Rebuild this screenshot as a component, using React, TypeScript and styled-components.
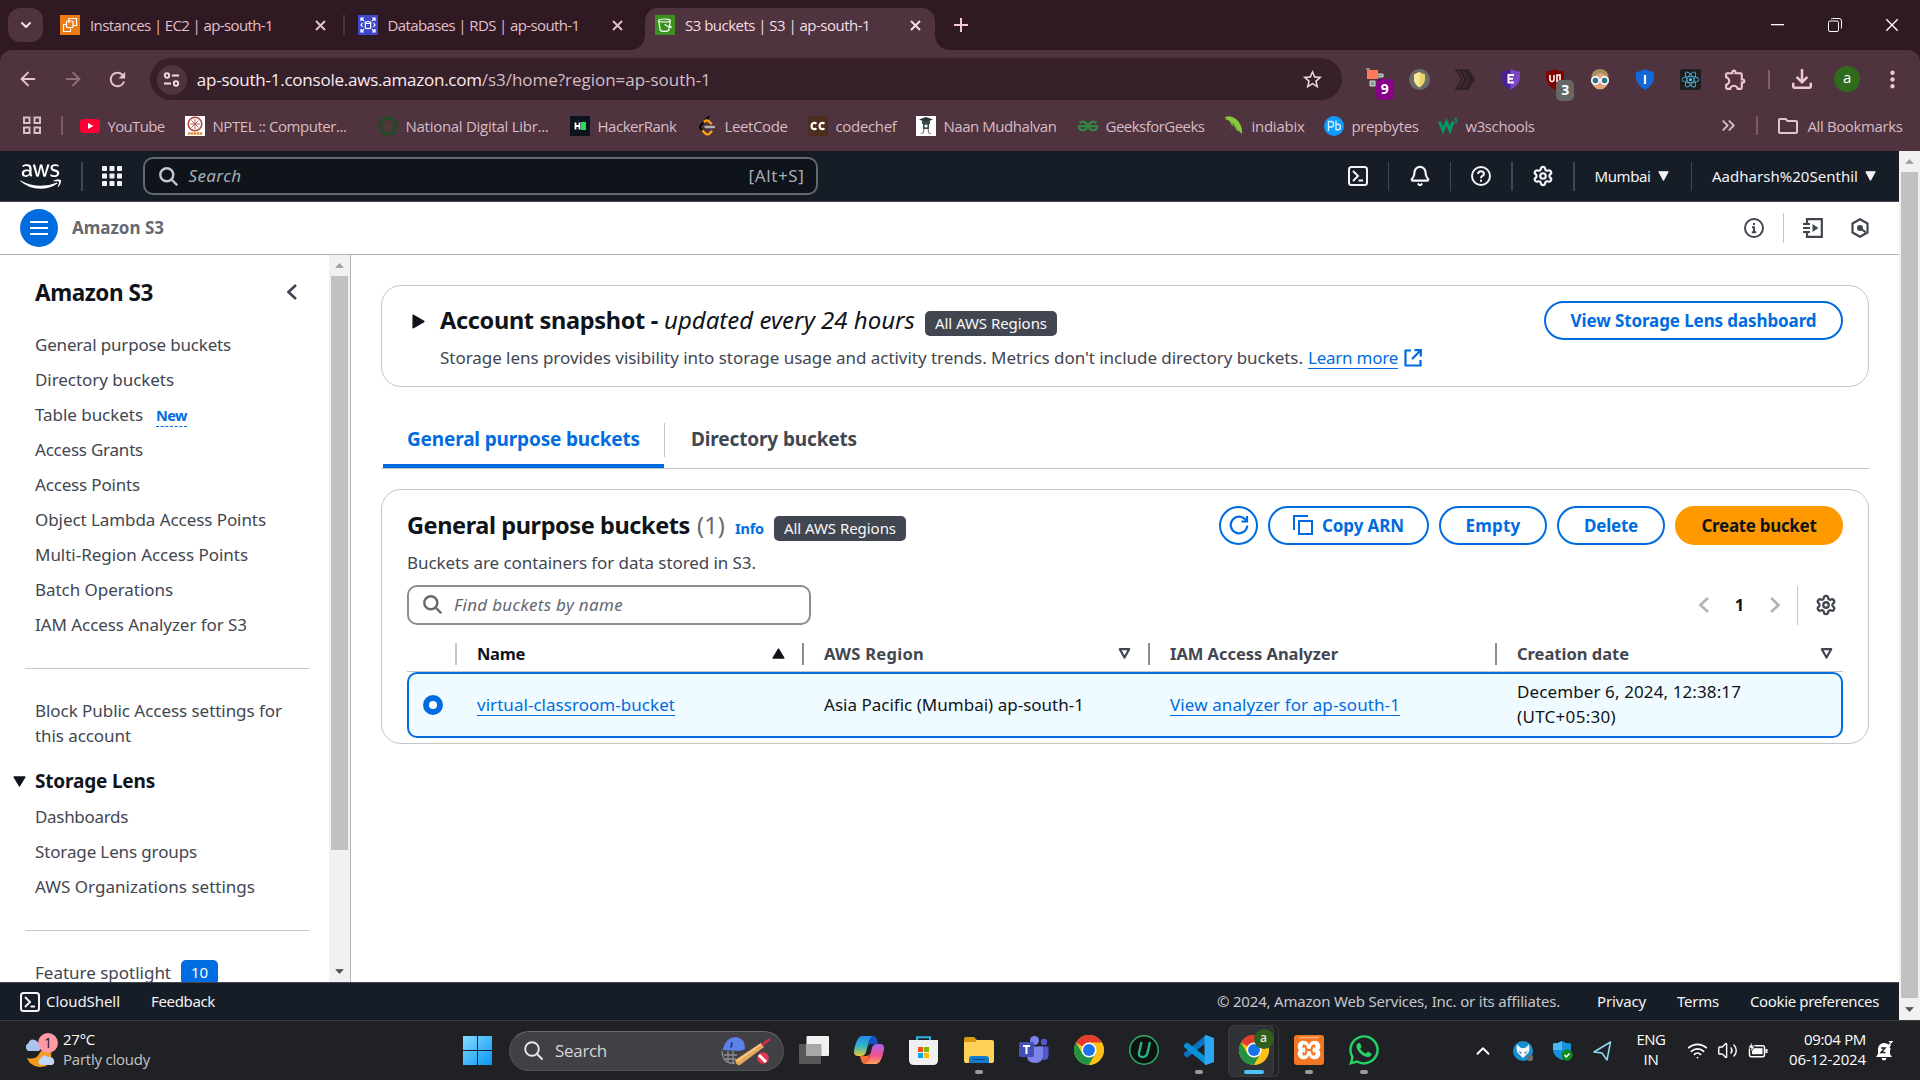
import React, { useLayoutEffect, useRef, useState } from "react";
import styled, { createGlobalStyle, css } from "styled-components";
import { Settings, Bell, Wifi, Volume2, ArrowLeft, ArrowRight, ChevronDown, ChevronUp, ChevronsRight } from "lucide-react";
import { FaAws, FaReact, FaWhatsapp } from "react-icons/fa";
import { MdOutlineExtension, MdStarBorder, MdOutlineFileDownload, MdMoreVert, MdOutlineFolder, MdRefresh } from "react-icons/md";
import { SiGeeksforgeeks } from "react-icons/si";

const ui = `"Open Sans", "Noto Sans", sans-serif`;
const ember = `"Noto Sans", "Open Sans", sans-serif`;
const blue = "#006ce0";
const ink = "#0f141a";
const grey = "#424650";

const Global = createGlobalStyle`
  * { box-sizing: border-box; }
  body { margin: 0; background: #fff; overflow: hidden; }
  svg { display: block; flex: none; }
`;

/* ---------- text that keeps to a known width ---------- */
const FitSpan = styled.span`
  display: inline-block;
  white-space: pre;
  flex: none;
`;
function Fit({ w, children, className }: { w: number; children: string; className?: string }) {
  const ref = useRef<HTMLSpanElement>(null);
  const [spacing, setSpacing] = useState(0);
  useLayoutEffect(() => {
    const el = ref.current;
    if (el) setSpacing((w - el.getBoundingClientRect().width) / children.length);
  }, []);
  return (
    <FitSpan ref={ref} className={className} style={{ letterSpacing: `${spacing}px` }}>
      {children}
    </FitSpan>
  );
}

const Screen = styled.div`
  width: 1920px;
  height: 1080px;
  display: flex;
  flex-direction: column;
  overflow: hidden;
  background: #fff;
`;

/* ---------- browser chrome ---------- */
const TabStrip = styled.div`
  height: 50px;
  background: #2f1922;
  display: flex;
  align-items: center;
  padding-left: 8px;
  font: 400 15px/20px ${ui};
  color: #e3bfcb;
`;
const TabSearch = styled.div`
  width: 35px;
  height: 34px;
  border-radius: 12px;
  background: #4f333e;
  color: #f5dfe6;
  display: grid;
  place-items: center;
`;
const Tab = styled.div<{ $w: number; $pad: number; $close: number }>`
  width: ${(p) => p.$w}px;
  padding-left: ${(p) => p.$pad}px;
  padding-right: ${(p) => p.$close}px;
  height: 42px;
  display: flex;
  align-items: center;
`;
const ActiveTab = styled(Tab)`
  align-self: flex-end;
  padding-bottom: 8px;
  position: relative;
  background: #4f333e;
  border-radius: 13px 13px 0 0;
  color: #f5dfe6;
  &::before,
  &::after {
    content: "";
    position: absolute;
    bottom: 0;
    width: 14px;
    height: 14px;
  }
  &::before {
    left: -14px;
    background: radial-gradient(circle at 0 0, transparent 13.5px, #4f333e 14px);
  }
  &::after {
    right: -14px;
    background: radial-gradient(circle at 100% 0, transparent 13.5px, #4f333e 14px);
  }
`;
const TabTitle = styled.div`
  margin-left: 10px;
  flex: 1;
`;
const TabClose = styled.div`
  width: 20px;
  display: grid;
  place-items: center;
`;
const TabDivider = styled.div`
  width: 2px;
  height: 20px;
  background: #4f333e;
`;
const NewTab = styled.div`
  width: 51px;
  display: grid;
  place-items: center;
`;
const WindowButtons = styled.div`
  margin-left: auto;
  display: grid;
  grid-template-columns: repeat(3, 57px);
  place-items: center;
  color: #fff;
`;
const ToolbarWrap = styled.div`
  background: #2f1922;
`;
const Toolbar = styled.div`
  height: 101px;
  background: #4f333e;
  border-radius: 12px 12px 0 0;
`;
const AddressRow = styled.div`
  height: 58px;
  display: flex;
  align-items: center;
  padding-left: 6px;
  color: #e8c3d0;
`;
const NavButton = styled.div<{ $dim?: boolean }>`
  width: 44.6px;
  display: grid;
  place-items: center;
  opacity: ${(p) => (p.$dim ? 0.42 : 1)};
`;
const Omnibox = styled.div`
  width: 1192px;
  height: 42px;
  margin-left: 10px;
  border-radius: 21px;
  background: #36202a;
  display: flex;
  align-items: center;
  padding: 1px 18px 0 7px;
  font: 400 17px/24px ${ui};
  color: #d4bdc5;
`;
const SiteInfo = styled.div`
  width: 30px;
  height: 30px;
  border-radius: 50%;
  background: #4f333e;
  color: #f3dbe3;
  display: grid;
  place-items: center;
  margin-right: 10px;
`;
const Host = styled(Fit)`
  color: #fbecf1;
`;
const StarSlot = styled.div`
  margin-left: auto;
  color: #ecd7de;
`;
const Extensions = styled.div`
  display: grid;
  grid-template-columns: repeat(9, 45.1px);
  place-items: center;
  margin-left: 10.5px;
`;
const Ext = styled.div`
  position: relative;
  display: grid;
  place-items: center;
`;
const ExtBadge = styled.span<{ $bg: string }>`
  position: absolute;
  left: 11px;
  top: 11px;
  width: 18px;
  height: 21px;
  border-radius: 5px;
  background: ${(p) => p.$bg};
  color: #fff;
  font: 700 14px/20px ${ui};
  text-align: center;
`;
const ToolDivider = styled.div`
  width: 1.5px;
  height: 19px;
  margin: 0 10px 0 10px;
  background: #80606c;
`;
const ToolSlot = styled.div`
  width: 45px;
  display: grid;
  place-items: center;
`;
const Avatar = styled.div`
  width: 26px;
  height: 26px;
  border-radius: 50%;
  background: #2f6b1c;
  color: #fff;
  font: 400 15px/23px ${ui};
  text-align: center;
`;
const BookmarkRow = styled.div`
  height: 35px;
  display: flex;
  align-items: center;
  font: 400 15px/20px ${ui};
  color: #d6bcc5;
  padding-left: 22px;
`;
const BookmarkDivider = styled.div`
  width: 2px;
  height: 19px;
  margin: 0 17px 0 18.5px;
  background: #7a5a66;
`;
const Bookmark = styled.div<{ $w: number }>`
  width: ${(p) => p.$w}px;
  display: flex;
  align-items: center;
  gap: 8px;
`;
const BookmarkEnd = styled.div`
  margin-left: auto;
  padding-right: 17.5px;
  display: flex;
  align-items: center;
`;
const EndDivider = styled(BookmarkDivider)`
  margin: 0 18px 0 17px;
`;
const FolderLabel = styled.div`
  display: flex;
  align-items: center;
  gap: 8px;
`;

/* ---------- page area ---------- */
const Viewport = styled.div`
  height: 869px;
  display: flex;
`;
const Page = styled.div`
  width: 1899px;
  display: flex;
  flex-direction: column;
  font-family: ${ember};
`;
const PageScroll = styled.div`
  width: 21px;
  background: #f1f1f1;
  display: flex;
  flex-direction: column;
  align-items: center;
`;
const ScrollCap = styled.div`
  height: 21px;
  display: grid;
  place-items: center;
`;
const ScrollThumb = styled.div<{ $h: number }>`
  width: 17px;
  height: ${(p) => p.$h}px;
  background: #c1c1c1;
  margin-bottom: auto;
`;
const AwsNav = styled.div`
  height: 51px;
  background: #161d26;
  border-bottom: 1px solid #424650;
  display: flex;
  align-items: center;
  padding-left: 20px;
  color: #f3f3f7;
  font-size: 15px;
`;
const NavDivider = styled.div<{ $l?: number; $r?: number }>`
  width: 1.5px;
  height: 29px;
  background: #424650;
  margin: 0 ${(p) => p.$r || 0}px 0 ${(p) => p.$l || 0}px;
`;
const NavSearch = styled.div`
  margin-left: 21px;
  width: 675px;
  height: 38px;
  border: 2px solid #656871;
  border-radius: 10px;
  background: #0f141a;
  color: #a9abb4;
  display: flex;
  align-items: center;
  padding: 0 11px 0 14px;
  font-size: 17px;
`;
const Italic = styled(Fit)`
  font-style: italic;
`;
const NavSearchText = styled.div`
  margin: -1px 0 0 11px;
  flex: 1;
`;
const NavShortcut = styled.div`
  margin-top: -2px;
`;
const NavRight = styled.div`
  margin-left: auto;
  display: flex;
  align-items: center;
`;
const NavIcon = styled.div`
  width: 60.2px;
  display: grid;
  place-items: center;
`;
const NavMenu = styled.div<{ $l: number; $r: number }>`
  display: flex;
  align-items: center;
  gap: 7px;
  padding: 0 ${(p) => p.$r}px 0 ${(p) => p.$l}px;
`;
const Crumbs = styled.div`
  height: 53px;
  border-bottom: 1px solid #b4b4bb;
  display: flex;
  align-items: center;
  padding: 0 29px 0 20px;
`;
const MenuButton = styled.div`
  width: 38px;
  height: 38px;
  border-radius: 50%;
  background: ${blue};
  display: grid;
  place-items: center;
  margin-right: 14px;
`;
const CrumbText = styled.div`
  margin-top: -2px;
  font-weight: 700;
  font-size: 17px;
  color: #656871;
`;
const CrumbTools = styled.div`
  margin-left: auto;
  display: flex;
  align-items: center;
  color: ${grey};
`;
const CrumbDivider = styled.div`
  width: 1px;
  height: 30px;
  margin: 0 19px;
  background: #c6c6cd;
`;
const CrumbGap = styled.div`
  width: 27px;
`;
const Columns = styled.div`
  flex: 1;
  display: flex;
  min-height: 0;
`;
const Sidebar = styled.div`
  width: 351px;
  flex: none;
  border-right: 1px solid #b4b4bb;
  display: flex;
`;
const SideNav = styled.div`
  width: 329px;
  overflow: hidden;
  padding-left: 35px;
  font-size: 17px;
  line-height: 25px;
  color: ${grey};
`;
const SideHead = styled.div`
  height: 72px;
  display: flex;
  align-items: center;
  justify-content: space-between;
  padding: 2px 32px 0 0;
  font-size: 22.5px;
  font-weight: 700;
  color: ${ink};
`;
const SideLink = styled.div`
  height: 35px;
  display: flex;
  align-items: center;
  white-space: pre;
`;
const SideRule = styled.div<{ $t: number; $b: number }>`
  height: 1px;
  width: 284px;
  margin: ${(p) => p.$t}px 0 ${(p) => p.$b}px -10px;
  background: #c6c6cd;
`;
const SideBlock = styled.div`
  display: flex;
  flex-direction: column;
  align-items: flex-start;
`;
const SideSection = styled.div`
  margin: 15px 0 0 -22px;
  height: 36px;
  display: flex;
  align-items: center;
  gap: 9px;
  color: ${ink};
  font-weight: 700;
  font-size: 19px;
`;
const NewTag = styled.span`
  margin: 2px 0 0 13px;
  font-weight: 700;
  font-size: 14.5px;
  line-height: 21px;
  color: ${blue};
  border-bottom: 1px dashed ${blue};
`;
const CountTag = styled.span`
  margin-left: 10px;
  width: 37px;
  height: 25px;
  line-height: 25px;
  border-radius: 5px;
  background: ${blue};
  color: #fff;
  font-size: 15px;
  text-align: center;
`;
const Main = styled.div`
  flex: 1;
  min-width: 0;
  padding: 30px 30px 0;
  color: ${ink};
`;
const card = css`
  border: 1px solid #c6c6cd;
  border-radius: 20px;
`;
const SnapshotCard = styled.div`
  ${card}
  height: 102px;
  padding: 15px 25px 0 30px;
  display: flex;
  align-items: flex-start;
`;
const SnapArrow = styled.div`
  width: 28px;
  padding-top: 13px;
`;
const SnapBody = styled.div`
  flex: 1;
`;
const TitleLine = styled.div`
  height: 40px;
  padding-bottom: 3px;
  display: flex;
  align-items: center;
  font-size: 23.5px;
  line-height: 30px;
`;
const Strong = styled(Fit)`
  font-weight: 700;
`;
const TitleItalic = styled(Italic)`
  margin-left: 6px;
  font-size: 24px;
`;
const RegionTag = styled.span`
  margin: 8px 0 0 10px;
  width: 132px;
  height: 25px;
  border-radius: 5px;
  background: ${grey};
  color: #f9f9fa;
  font-size: 15px;
  line-height: 25px;
  text-align: center;
`;
const Desc = styled.div`
  height: 34px;
  display: flex;
  align-items: center;
  font-size: 17px;
  line-height: 22px;
  color: ${grey};
`;
const Link = styled(Fit)`
  color: ${blue};
  border-bottom: 1.5px solid ${blue};
  font-size: 17px;
  line-height: 20px;
`;
const LearnMore = styled(Link)`
  margin: 0 6px 0 5px;
`;
const Button = styled.div<{ $w: number }>`
  width: ${(p) => p.$w}px;
  height: 39px;
  border: 2px solid ${blue};
  border-radius: 20px;
  padding-bottom: 1px;
  color: ${blue};
  font-weight: 700;
  font-size: 17px;
  display: flex;
  align-items: center;
  justify-content: center;
  gap: 9px;
`;
const PrimaryButton = styled(Button)`
  background: #ff9900;
  border-color: #ff9900;
  color: ${ink};
`;
const Tabs = styled.div`
  margin-top: 26px;
  height: 56px;
  border-bottom: 1px solid #c6c6cd;
  display: flex;
  font-weight: 700;
  font-size: 19px;
`;
const TabItem = styled.div<{ $active?: boolean }>`
  height: 55px;
  padding: 0 24px 3px 26px;
  display: flex;
  align-items: center;
  color: ${(p) => (p.$active ? blue : grey)};
`;
const ActiveTabItem = styled(TabItem)`
  margin-left: 2px;
  width: 281px;
  padding: 1px 0 0 24px;
  border-bottom: 4px solid ${blue};
  border-radius: 2px 2px 0 0;
`;
const TabRule = styled.div`
  width: 1px;
  height: 34px;
  margin-top: 10px;
  background: #c6c6cd;
`;
const TableCard = styled.div`
  ${card}
  margin-top: 20px;
  height: 255px;
  padding: 16px 25px 0;
`;
const TableHead = styled.div`
  display: flex;
  justify-content: space-between;
`;
const Counter = styled(Fit)`
  margin-left: 7px;
  color: #656871;
`;
const InfoLink = styled(Fit)`
  margin: 7px 0 0 10px;
  font-weight: 700;
  font-size: 14.5px;
  color: ${blue};
`;
const Actions = styled.div`
  display: flex;
  gap: 10px;
`;
const FilterRow = styled.div`
  margin-top: 5px;
  display: flex;
  align-items: center;
  justify-content: space-between;
`;
const FilterBox = styled.div`
  width: 404px;
  height: 40px;
  border: 2px solid #8c8c94;
  border-radius: 10px;
  display: flex;
  align-items: center;
  gap: 12px;
  padding: 0 0 1px 14px;
  color: #656871;
  font-size: 17px;
`;
const Pager = styled.div`
  display: flex;
  align-items: center;
  padding-right: 6px;
  color: ${grey};
`;
const PageNumber = styled.span`
  width: 61px;
  text-align: center;
  font-weight: 700;
  font-size: 16.5px;
  line-height: 24px;
  padding-bottom: 1px;
  color: ${ink};
`;
const PagerDivider = styled.div`
  width: 1px;
  height: 39px;
  margin: 0 17px 0 17px;
  background: #c6c6cd;
`;
const HeaderRow = styled.div`
  display: grid;
  grid-template-columns: 48px 347px 346px 347px minmax(0, 1fr);
  align-items: center;
  margin-top: 11px;
  height: 36px;
  border-bottom: 1px solid #c6c6cd;
  font-weight: 700;
  font-size: 16.5px;
`;
const HeaderCell = styled.div<{ $light?: boolean; $dark?: boolean; $r?: number }>`
  height: 22px;
  border-left: 2px solid ${(p) => (p.$light ? "#c6c6cd" : "#8c8c94")};
  padding: 0 ${(p) => p.$r || 17}px 0 20px;
  display: flex;
  align-items: center;
  justify-content: space-between;
  color: ${(p) => (p.$dark ? ink : grey)};
`;
const DataRow = styled.div`
  display: grid;
  grid-template-columns: 48px 347px 346px 347px minmax(0, 1fr);
  align-items: center;
  height: 66px;
  border: 2px solid ${blue};
  border-radius: 10px;
  background: #f0fbff;
  font-size: 17px;
  line-height: 25px;
`;
const DataCell = styled.div<{ $up?: number }>`
  padding: 0 0 ${(p) => p.$up || 0}px 20px;
  display: flex;
  flex-direction: column;
  align-items: flex-start;
`;
const Radio = styled.div`
  margin-left: 14px;
  width: 20px;
  height: 20px;
  border-radius: 50%;
  border: 6px solid ${blue};
  background: #fff;
`;
const Footer = styled.div`
  height: 38px;
  background: #161d26;
  border-top: 1px solid #424650;
  display: flex;
  align-items: center;
  padding: 0 20px;
  color: #f3f3f7;
  font-size: 15px;
`;
const FooterItem = styled.div<{ $l: number; $soft?: boolean }>`
  margin: -1px 0 0 ${(p) => p.$l}px;
  color: ${(p) => (p.$soft ? "#c6c6cd" : "inherit")};
`;
const FooterEnd = styled.div`
  margin-left: auto;
  display: flex;
`;

/* ---------- taskbar ---------- */
const Taskbar = styled.div`
  height: 60px;
  background: #202124;
  border-top: 1px solid #3b3c3e;
  display: flex;
  align-items: center;
  font: 400 15px/20px ${ui};
  color: #fff;
`;
const Weather = styled.div`
  width: 463px;
  padding-left: 23px;
  display: flex;
  gap: 4px;
  align-items: center;
`;
const Lines = styled.div<{ $align?: string }>`
  display: flex;
  flex-direction: column;
  padding-bottom: 3px;
  align-items: ${(p) => p.$align || "flex-start"};
`;
const Soft = styled(Fit)`
  color: #c4c4c6;
`;
const TaskSearch = styled.div`
  margin: 0 2px 0 17px;
  width: 275px;
  height: 40px;
  border-radius: 20px;
  background: #414145;
  border: 1px solid #515155;
  border-top-color: #68686b;
  display: flex;
  align-items: center;
  padding: 0 12px 0 14px;
  font-size: 17px;
  color: #d6d6d8;
`;
const TaskSearchText = styled.div`
  margin-left: 12px;
  flex: 1;
`;
const TaskSlot = styled.div<{ $active?: boolean }>`
  width: 55px;
  height: 59px;
  padding-top: 14px;
  display: flex;
  flex-direction: column;
  align-items: center;
  position: relative;
  ${(p) =>
    p.$active &&
    css`
      &::before {
        content: "";
        position: absolute;
        left: 2px;
        top: 4px;
        width: 44px;
        height: 50px;
        background: #313236;
        border: 1px solid #3c3d41;
        border-radius: 6px;
      }
      &::after {
        content: "";
        position: absolute;
        left: 44px;
        top: 4px;
        width: 8px;
        height: 50px;
        border: 1px solid #38393d;
        border-left: 0;
        border-radius: 0 6px 6px 0;
      }
    `}
`;
const TaskIcon = styled.div`
  position: relative;
  z-index: 1;
  height: 30px;
  width: 30px;
  display: grid;
  place-content: center;
`;
const RunMark = styled.div<{ $on?: boolean }>`
  position: relative;
  z-index: 1;
  margin-top: 5px;
  width: ${(p) => (p.$on ? 20 : 8)}px;
  height: 4px;
  border-radius: 2px;
  background: ${(p) => (p.$on ? "#4cc2ff" : "#9a9a9c")};
`;
const ProfileDot = styled.span`
  position: absolute;
  left: 15px;
  top: -6px;
  width: 20px;
  height: 20px;
  border-radius: 50%;
  background: #2f5f1c;
  color: #e6efe2;
  font: 600 12px/18px ${ui};
  text-align: center;
`;
const Tray = styled.div`
  margin-left: auto;
  display: flex;
  align-items: center;
  padding-right: 22px;
`;
const TraySlot = styled.div<{ $w: number }>`
  width: ${(p) => p.$w}px;
  display: grid;
  place-items: center;
`;
const ClockSlot = styled(TraySlot)`
  justify-items: end;
  padding-right: 5px;
`;

/* ---------- drawings ---------- */
const CloseX = ({ s = 11, w = 2 }: { s?: number; w?: number }) => (
  <svg width={s} height={s} viewBox="0 0 11 11" stroke="currentColor" strokeWidth={w}><path d="M1 1l9 9M10 1l-9 9" /></svg>
);
const Magnifier = ({ c = "currentColor" }: { c?: string }) => (
  <svg width="19" height="19" viewBox="0 0 19 19" fill="none" stroke={c} strokeWidth="2.400"><circle cx="7.800" cy="7.800" r="6.500" /><path d="M12.500 12.500l5.700 5.700" /></svg>
);
const Ec2Icon = () => (
  <svg width="20" height="20" viewBox="0 0 20 20" fill="none">
    <rect width="20" height="20" fill="#ed7a12" />
    <g stroke="#fff" strokeWidth="1.200"><path d="M9 8V3.500h7.500v7H13" /><rect x="6.500" y="6" width="6.500" height="6.500" rx="1" /><path d="M6 9.500H3.500v7h7V13.500" /></g>
  </svg>
);
const RdsIcon = () => (
  <svg width="20" height="20" viewBox="0 0 20 20" fill="none">
    <rect width="20" height="20" fill="#3f48cc" />
    <g stroke="#fff" strokeWidth="1.200"><path d="M3 6V3h3M3 3l3 3M17 6V3h-3M17 3l-3 3M3 14v3h3M3 17l3-3M17 14v3h-3M17 17l-3-3M4.500 8L3 10l1.500 2M15.500 8l1.500 2-1.500 2" /><ellipse cx="10" cy="7.500" rx="2.700" ry="1" /><path d="M7.300 7.500v5c0 1.400 5.400 1.400 5.400 0v-5" /></g>
  </svg>
);
const S3Icon = () => (
  <svg width="20" height="20" viewBox="0 0 20 20" fill="none">
    <rect width="20" height="20" fill="#3c8f22" />
    <g stroke="#fff" strokeWidth="1.200"><ellipse cx="9.500" cy="5.500" rx="5.800" ry="1.500" /><path d="M3.700 5.500l1.500 9.800c1.500 1.400 7.100 1.400 8.600 0l1.500-9.800M9.500 9.500l5.500 2.800c1.500.5 1.700-.5.2-1.300" /></g>
  </svg>
);
const TuneIcon = () => (
  <svg width="17" height="17" viewBox="0 0 17 17" fill="none" stroke="currentColor" strokeWidth="1.900">
    <circle cx="4" cy="4.500" r="2.200" /><path d="M9 4.500h7M1 12.500h7" /><circle cx="13" cy="12.500" r="2.200" />
  </svg>
);
const AppsGrid = () => (
  <svg width="20" height="19" viewBox="0 0 20 19" fill="none" stroke="#d9bfc8" strokeWidth="2">
    <rect x="2" y="1.500" width="5.500" height="5.500" /><rect x="12.500" y="1.500" width="5.500" height="5.500" /><rect x="2" y="11.500" width="5.500" height="5.500" /><rect x="12.500" y="11.500" width="5.500" height="5.500" />
  </svg>
);
const bm: Record<string, React.ReactNode> = {
  yt: <svg width="20" height="20" viewBox="0 0 20 20"><rect y="3" width="20" height="14" rx="3.500" fill="#ff0033" /><path d="M8 7l5.500 3L8 13z" fill="#fff" /></svg>,
  nptel: <svg width="20" height="20" viewBox="0 0 20 20" fill="none"><rect width="20" height="20" fill="#fff" /><circle cx="10" cy="8" r="6.800" stroke="#b0403a" strokeWidth="1.500" /><path d="M10 3v10M5 8h10M6.500 4.500l7 7M13.500 4.500l-7 7" stroke="#b5544f" strokeWidth=".9" /><path d="M3 17.500h14" stroke="#e28a2b" strokeWidth="2.400" strokeDasharray="2.400 .6" /></svg>,
  ndl: <svg width="20" height="20" viewBox="0 0 20 20" fill="none"><circle cx="10" cy="10" r="8.200" stroke="#23492b" strokeWidth="3.400" /><circle cx="10" cy="10" r="4.500" fill="#4b3a35" /></svg>,
  hr: <svg width="20" height="20" viewBox="0 0 20 20" fill="none"><rect width="20" height="20" fill="#0b141e" /><path d="M5.500 6.500v7M9.500 6.500v7M5.500 10h4" stroke="#fff" strokeWidth="1.800" /><rect x="11" y="6" width="5" height="8" fill="#1ee05b" /></svg>,
  lc: <svg width="20" height="20" viewBox="0 0 20 20" fill="none" strokeWidth="2.300" strokeLinecap="round"><path d="M11.500 1L3.800 9.300Q2.300 11 3.800 12.700L6 15" stroke="#0a0a0a" /><path d="M6 15l2.200 2.400q2.300 1.900 4.500 0l1.800-1.900M7.500 5.500q2.500-2 4.800.2l1.700 1.700" stroke="#ffa116" /><path d="M8.500 11h8.500" stroke="#b3b3b3" /></svg>,
  cc: <svg width="20" height="20" viewBox="0 0 20 20" fill="none"><rect width="20" height="20" fill="#4f2d1c" /><path d="M9 7.800Q7.800 6.500 6 7T4.200 10 6 13t3-.8M17 7.800Q15.800 6.500 14 7t-1.800 3 1.800 3 3-.8" transform="translate(-.6 0)" stroke="#fff" strokeWidth="2.200" /></svg>,
  nm: <svg width="20" height="20" viewBox="0 0 20 20"><rect width="20" height="20" fill="#fff" /><path d="M10 1l7 2.600-7 2.600-7-2.600z" fill="#25363a" /><path d="M6 5h8v3H6zM7 8h6v5H7z" fill="#3a4c50" /><circle cx="10" cy="10" r="1.600" fill="#fff" /><path d="M8 13l-1 4M12 13l1 4" stroke="#667" strokeWidth="1" /><path d="M4 18l2-1.500 2 1.500zM12 18l2-1.500 2 1.500z" fill="#d98a4a" /></svg>,
  gfg: <SiGeeksforgeeks size={20} color="#2f8d46" stroke="#2f8d46" strokeWidth={0.6} />,
  ib: <svg width="20" height="20" viewBox="0 0 20 20"><path d="M1 1C10-2 19 7 18 18l-3.500-3-1.500 0-3-5-2 0L5 4.500 2 4z" fill="#6fae2c" /><path d="M1 1l10 8 7 9C19 7 10-2 1 1z" fill="#8cc63f" /><path d="M10 8L4 17q-2 2-3-.5" fill="none" stroke="#4a4a4a" strokeWidth="1" /></svg>,
  pb: <svg width="20" height="20" viewBox="0 0 20 20" fill="none"><circle cx="10" cy="10" r="10" fill="#0d9bff" /><path d="M4.500 15V5.500h2.700q2.500.2 2.500 2.700T7.200 11H4.500M12 4.500v9.300h2.200q2.200-.3 2.200-2.800T14.200 8.300H12" stroke="#d4edff" strokeWidth="1.400" /></svg>,
  w3: <svg width="20" height="20" viewBox="0 0 20 20" fill="none"><path d="M1.500 5.500l3.500 9 3.500-8.500 3.500 8.500 3-9" stroke="#059862" strokeWidth="3" /><path d="M16 2.500h2.600l-1.300 1.800q2 .4 1.200 2-1 1-2.500.1" stroke="#059862" strokeWidth="1.100" /></svg>,
};
const NineDots = () => (
  <svg width="20" height="20" viewBox="0 0 20 20" fill="currentColor">
    {[0, 7.5, 15].map((y) => [0, 7.5, 15].map((x) => <rect key={`${x}-${y}`} x={x} y={y} width="5" height="5" rx=".8" />))}
  </svg>
);
const ShellIcon = () => (
  <svg width="20" height="20" viewBox="0 0 20 20" fill="none" stroke="currentColor" strokeWidth="2"><rect x="1" y="1" width="18" height="18" rx="2.500" /><path d="M5 5l5 5-5 5" /><path d="M10.500 14.500H15" /></svg>
);
const HelpIcon = () => (
  <svg width="20" height="20" viewBox="0 0 20 20" fill="none" stroke="currentColor" strokeWidth="2"><circle cx="10" cy="10" r="9" /><path d="M7 8q.2-2.800 3-2.800T13 7.800Q13 9.300 11.200 10 10 10.500 10 12.200" /><path d="M10 13.800v2" /></svg>
);
const InfoIcon = () => (
  <svg width="20" height="20" viewBox="0 0 20 20" fill="none" stroke="currentColor" strokeWidth="2"><circle cx="10" cy="10" r="9" /><path d="M10 5v2M8 9.300h2V14M7.800 14.200h4.400" /></svg>
);
const NotebookIcon = () => (
  <svg width="20" height="20" viewBox="0 0 20 20" fill="none" stroke="currentColor" strokeWidth="2.200"><path d="M4 6V1.200h14.800v17.600H4V14" /><path d="M0 6h7M0 10h7M0 14h7" /><path d="M9.500 6v8l6-4z" fill="currentColor" stroke="none" /></svg>
);
const HexIcon = () => (
  <svg width="20" height="20" viewBox="0 0 20 20" fill="none" stroke="currentColor" strokeWidth="2.200"><path d="M10 1.200l7.500 4.300v9L10 18.800l-7.500-4.300v-9z" strokeLinejoin="round" /><circle cx="10" cy="10" r="3" fill="currentColor" stroke="none" /><path d="M10 10l5.500 4.200" /></svg>
);
const Tri = ({ d, s = 12, fill = "currentColor", h = s }: { d: "up" | "down" | "right"; s?: number; fill?: string; h?: number }) => (
  <svg width={s} height={h} viewBox="0 0 12 12" preserveAspectRatio="none" fill={fill} stroke={fill} strokeWidth="1.200" strokeLinejoin="round">
    <path d={d === "up" ? "M6 1L11 11H1z" : d === "down" ? "M1 1h10L6 11z" : "M1 1l10 5L1 11z"} />
  </svg>
);
const SortIcon = () => (
  <svg width="13" height="11" viewBox="0 0 13 11" fill="none" stroke="currentColor" strokeWidth="2.200" strokeLinejoin="round"><path d="M1.800 1.200h9.400L6.500 9.500z" /></svg>
);
const CopyIcon = () => (
  <svg width="20" height="20" viewBox="0 0 20 20" fill="none" stroke="currentColor" strokeWidth="2"><path d="M1 15V1h14" /><rect x="6" y="6" width="13" height="13" /></svg>
);
const ReloadIcon = () => (
  <svg width="20" height="20" viewBox="0 0 20 20" fill="none" stroke="currentColor" strokeWidth="2.200"><path d="M17.300 6A8.300 8.300 0 1 0 18.300 10.500" /><path d="M18 1v5.500h-5.500" /></svg>
);
const ExternalIcon = () => (
  <svg width="18" height="18" viewBox="0 0 18 18" fill="none" stroke={blue} strokeWidth="2.200"><path d="M7 1.500H1.500v15h15V11M10.500 1.200h6.300v6.300M16.500 1.500l-8.500 8.500" /></svg>
);
const Chev = ({ flip, c = "currentColor", w = 10, h = 16 }: { flip?: boolean; c?: string; w?: number; h?: number }) => (
  <svg width={w} height={h} viewBox="0 0 10 16" fill="none" stroke={c} strokeWidth="2.600"><path d={flip ? "M1 1l7.500 7L1 15" : "M9 1L1.500 8 9 15"} /></svg>
);
const WeatherIcon = () => (
  <svg width="36" height="36" viewBox="0 0 36 36">
    <path d="M4 25q9 2 12-4 3-5 6-5l6 1q2 18-12 17-9-1-12-9z" fill="#f39a1f" />
    <path d="M5 18a4.500 4.500 0 0 1 .5-8Q7 5 12 7q4 2 4 5 3 3 0 6z" fill="#a9c4f0" />
    <path d="M17 32a4 4 0 0 1 1-7q3-5 7-1 4-1 6 3 1 4-2 5z" fill="#c1d6f7" />
    <circle cx="25" cy="10" r="10" fill="#ff99a4" />
    <text x="25" y="15" textAnchor="middle" fontSize="14" fontFamily="Open Sans" fill="#222">1</text>
  </svg>
);
const WindowsIcon = () => (
  <svg width="29" height="29" viewBox="0 0 29 29">
    <defs><linearGradient id="win" x1="0" y1="0" x2="1" y2="1" gradientUnits="objectBoundingBox"><stop offset="0" stopColor="#84dcff" /><stop offset="1" stopColor="#0a94f5" /></linearGradient></defs>
    <path d="M0 0h14v14H0zM15 0h14v14H15zM0 15h14v14H0zM15 15h14v14H15z" fill="url(#win)" />
  </svg>
);
const CricketIcon = () => (
  <svg width="50" height="30" viewBox="0 0 50 30" fill="none">
    <path d="M1 15Q2 29 14 27M3 19h13M3 23h12M7 15v12M12 15v12" stroke="#8c8c94" strokeWidth="1.300" />
    <path d="M2 13Q5 1 15 1q9 1 9 12l-5 2-18-1z" fill="#5b82e6" /><path d="M11 6.500l-1 5" stroke="#24409a" strokeWidth="2" />
    <path d="M14 24l26-17 3 4-24 18q-4 1-5-5z" fill="#e9a95c" /><path d="M16 25L40 8" stroke="#f8d29a" strokeWidth="1.500" /><path d="M41 9l8-6" stroke="#d92b3f" strokeWidth="2.600" />
    <circle cx="42" cy="22" r="5.800" fill="#e8354a" /><path d="M38 19l7 7" stroke="#fff" strokeWidth="3" />
  </svg>
);
const TaskViewIcon = () => (
  <svg width="30" height="28" viewBox="0 0 30 28"><rect y="8" width="22" height="20" rx="1" fill="#58585a" /><rect x="7.500" width="22.500" height="20" rx="1" fill="#f2f2f2" /><rect x="7.500" y="8" width="15" height="12" fill="#a8a8a8" /></svg>
);
const CopilotIcon = () => (
  <svg width="30" height="28" viewBox="0 0 30 28">
    <defs>
      <linearGradient id="cpa" x1="0" y1="0" x2="0" y2="1"><stop offset="0" stopColor="#1f8af0" /><stop offset=".5" stopColor="#2fb6c4" /><stop offset="1" stopColor="#e8c83a" /></linearGradient>
      <linearGradient id="cpb" x1="0" y1="0" x2="0" y2="1"><stop offset="0" stopColor="#a765f5" /><stop offset=".55" stopColor="#f0508e" /><stop offset="1" stopColor="#ffa35c" /></linearGradient>
    </defs>
    <path d="M16 0h3q3 0 4 4l1 4h-6q-3 0-4 3z" fill="#1552c9" />
    <path d="M14 28h-3q-3 0-4-4l-1-4h6q3 0 4-3z" fill="#f26b3a" />
    <path d="M7.500 0H19q-3 1-4 5l-3 11q-1 4-5 4H4q-4 0-4-4 0-3 2-9t5.500-7z" fill="url(#cpa)" />
    <path d="M22.500 28H11q3-1 4-5l3-11q1-4 5-4h3q4 0 4 4 0 3-2 9t-5.500 7z" fill="url(#cpb)" />
  </svg>
);
const StoreIcon = () => (
  <svg width="29" height="29" viewBox="0 0 29 29"><path d="M8 5V1.200h13V5" fill="none" stroke="#2bb3ea" strokeWidth="2" /><path d="M0 4h29v20q0 5-5 5H5q-5 0-5-5z" fill="#f0f0f0" /><path d="M9 11h5v5H9z" fill="#f25022" /><path d="M15 11h5v5h-5z" fill="#7fba00" /><path d="M9 17h5v5H9z" fill="#00a4ef" /><path d="M15 17h5v5h-5z" fill="#ffb900" /></svg>
);
const ExplorerIcon = () => (
  <svg width="30" height="27" viewBox="0 0 30 27"><path d="M0 2q0-2 2-2h8l3 3v6H0z" fill="#d99a12" /><path d="M0 5h11l2-2h15q2 0 2 2v19q0 2-2 2H2q-2 0-2-2z" fill="#ffd257" /><path d="M5 26v-4q0-3 3-3h14q3 0 3 3v4z" fill="#127fce" /><path d="M9 22.500h12" stroke="#0b4d84" strokeWidth="1.200" /></svg>
);
const TeamsIcon = () => (
  <svg width="30" height="28" viewBox="0 0 30 28"><circle cx="15.500" cy="4.500" r="4.500" fill="#7b83eb" /><circle cx="25" cy="6" r="3.200" fill="#5059c9" /><path d="M19 10.500h10.500v9q0 5-5.500 4.500z" fill="#5059c9" /><path d="M8 10.500h16v9Q24 27 16 27t-8-7z" fill="#7b83eb" /><rect y="6" width="15" height="15" rx="1.500" fill="#4450b8" /><path d="M4 10h7M7.500 10v8" stroke="#fff" strokeWidth="2" /></svg>
);
const ChromeIcon = () => (
  <svg width="30" height="30" viewBox="0 0 48 48"><circle cx="24" cy="24" r="24" fill="#fbc116" /><path d="M24 24L3.200 12A24 24 0 0 1 44.800 12H24z" fill="#e33b2e" /><path d="M3.200 12A24 24 0 0 0 24 48l10.400-18L24 24l-10.400 6z" fill="#229342" /><path d="M24 13h21a24 24 0 0 1-21 35l10-18z" fill="#fbc116" /><circle cx="24" cy="24" r="12" fill="#fff" /><circle cx="24" cy="24" r="9.500" fill="#1a73e8" /></svg>
);
const UIcon = () => (
  <svg width="30" height="30" viewBox="0 0 30 30" fill="none"><circle cx="15" cy="15" r="14.200" fill="#0d1110" stroke="#2fae66" strokeWidth="1.500" /><path d="M12.500 7L10 18q-.5 4 3.500 4t5-4L21 7" stroke="#27b38a" strokeWidth="2.400" /></svg>
);
const CodeIcon = () => (
  <svg width="30" height="30" viewBox="0 0 30 30"><path d="M22 0v8L4 22q-1 1-2 0l-2-2q-.8-1 0-2z" fill="#0d72bd" /><path d="M0 10l2-2q1-.8 2 0l18 14v8L0 12q-.8-1 0-2z" fill="#0a8fd8" /><path d="M22 0l8 3v24l-8 3q-1.500 0-1.500-2V2q0-2 1.500-2z" fill="#2aa6f2" /></svg>
);
const XamppIcon = () => (
  <svg width="30" height="30" viewBox="0 0 30 30" fill="none">
    <rect width="30" height="30" rx="3" fill="#f37623" /><path d="M5 2.500h20" stroke="#f9b27d" strokeWidth="1.500" />
    <g stroke="#fff" strokeWidth="4.600" strokeLinejoin="round">
      <path d="M11 15H9.500a3.500 3.500 0 1 1 3.300-4.500V15zM19 15h1.500a3.500 3.500 0 1 0-3.300-4.500V15zM11 15H9.500a3.500 3.500 0 1 0 3.300 4.500V15zM19 15h1.500a3.500 3.500 0 1 1-3.300 4.500V15z" />
      <path d="M11 15h8" />
    </g>
    <path d="M9 10.500q3-.5 3 2.300 0 2.200 3 2.200t3-2.200q0-2.800 3-2.300M9 19.500q3 .5 3-2.300 0-2.200 3-2.200t3 2.200q0 2.800 3 2.300" stroke="#f37623" strokeWidth="2" />
  </svg>
);
const WolfIcon = () => (
  <svg width="20" height="20" viewBox="0 0 20 20"><circle cx="10" cy="10" r="10" fill="#1690d2" /><path d="M4 3.500l4 3.500h4l4-3.500q1 5-.5 8L10 17l-5.500-5.500q-1.500-3-.5-8z" fill="#f2f6fa" /><path d="M5.500 10l3 1.500L8 13zM14.500 10l-3 1.500.5 1.500z" fill="#1a5f94" /><circle cx="17" cy="17" r="3.200" fill="#6e6e70" /></svg>
);
const DefenderIcon = () => (
  <svg width="20" height="20" viewBox="0 0 20 20"><path d="M9 0q4 2.500 9 2.500V9q0 6-9 10Q0 15 0 9V2.500Q5 2.500 9 0z" fill="#1792e0" /><path d="M9 0v9H0V2.500Q5 2.500 9 0z" fill="#49b8f5" /><circle cx="14" cy="14" r="5.700" fill="#118a1b" /><path d="M11.500 14l1.800 1.800 3.200-3.400" fill="none" stroke="#fff" strokeWidth="1.500" /></svg>
);
const BatteryIcon = () => (
  <svg width="20" height="17" viewBox="0 0 20 17" fill="none" stroke="#fff"><rect x="1.500" y="3.700" width="15" height="11" rx="2" strokeWidth="1.500" /><rect x="4" y="6.200" width="10.500" height="6" fill="#fff" stroke="none" /><path d="M18.500 7v4" strokeWidth="2" /><path d="M4 0L0 6h3v4l4-6H4.200z" fill="#fff" stroke="#202124" strokeWidth=".8" /></svg>
);
const SnoozeBell = () => (
  <svg width="17" height="20" viewBox="0 0 17 20"><path d="M8 2a6 6 0 0 0-6 6v5l-2 3h16l-2-3V8q0-6-6-6zM5.500 17h5q-.5 2.500-2.500 2.500T5.500 17z" fill="#fff" /><path d="M5 7h4l-4 4.500h4.500" fill="none" stroke="#202124" strokeWidth="1.500" /><path d="M11.500 4.500h2.500L11.500 8H15M12.800.7H16L13 4" fill="none" stroke="#fff" strokeWidth="1.200" /></svg>
);
const ShieldE = () => (
  <svg width="21" height="21" viewBox="0 0 21 21"><path d="M10.500 0Q15 2.500 20 2.500V8q0 8-9.500 13Q1 16 1 8V2.500Q6 2.500 10.500 0z" fill="#4a1f96" /><path d="M10.500 0Q15 2.500 20 2.500V8q0 8-9.500 13z" fill="#7a49c2" /><path d="M14 6H8.500v7.500H14M8.500 9.700h4.500" fill="none" stroke="#fff" strokeWidth="2" /></svg>
);

const Scroll = ({ thumb }: { thumb: number }) => (
  <>
    <ScrollCap><Tri d="up" s={9} h={5} fill="#a0a0a0" /></ScrollCap>
    <ScrollThumb $h={thumb} />
    <ScrollCap><Tri d="down" s={9} h={5} fill="#505050" /></ScrollCap>
  </>
);

const bookmarks: [string, string, number, number][] = [
  ["yt", "YouTube", 57, 105],
  ["nptel", "NPTEL :: Computer...", 134, 193],
  ["ndl", "National Digital Libr...", 143, 192],
  ["hr", "HackerRank", 79, 127],
  ["lc", "LeetCode", 63, 111],
  ["cc", "codechef", 61, 108],
  ["nm", "Naan Mudhalvan", 113, 162],
  ["gfg", "GeeksforGeeks", 99, 146],
  ["ib", "indiabix", 53, 100],
  ["pb", "prepbytes", 67, 114],
  ["w3", "w3schools", 69, 120],
];
const links: [string, number][] = [
  ["General purpose buckets", 196],
  ["Directory buckets", 139],
  ["Table buckets", 108],
  ["Access Grants", 108],
  ["Access Points", 105],
  ["Object Lambda Access Points", 231],
  ["Multi-Region Access Points", 213],
  ["Batch Operations", 138],
  ["IAM Access Analyzer for S3", 212],
];
const lensLinks: [string, number][] = [
  ["Dashboards", 93],
  ["Storage Lens groups", 162],
  ["AWS Organizations settings", 220],
];

const BrowserChrome = () => (
  <>
    <TabStrip>
      <TabSearch><ChevronDown size={16} strokeWidth={3} /></TabSearch>
      <Tab $w={300} $pad={17} $close={13}><Ec2Icon /><TabTitle><Fit w={183}>Instances | EC2 | ap-south-1</Fit></TabTitle><TabClose><CloseX /></TabClose></Tab>
      <TabDivider />
      <Tab $w={300} $pad={12.5} $close={18}><RdsIcon /><TabTitle><Fit w={192}>Databases | RDS | ap-south-1</Fit></TabTitle><TabClose><CloseX /></TabClose></Tab>
      <ActiveTab $w={290} $pad={10} $close={10}><S3Icon /><TabTitle><Fit w={185}>S3 buckets | S3 | ap-south-1</Fit></TabTitle><TabClose><CloseX /></TabClose></ActiveTab>
      <NewTab><svg width="14" height="14" viewBox="0 0 14 14" stroke="#f3c6d4" strokeWidth="2"><path d="M7 0v14M0 7h14" /></svg></NewTab>
      <WindowButtons>
        <svg width="13" height="2" viewBox="0 0 13 2"><path d="M0 0h13v1.300H0z" fill="#fff" /></svg>
        <svg width="14" height="14" viewBox="0 0 14 14" fill="none" stroke="#fff"><rect x=".5" y="3" width="10" height="10.500" rx="1.500" /><path d="M3 1q.5-.5 1.500-.5H11q2.500 0 2.500 2.500v6q0 1-.5 1.500" /></svg>
        <CloseX s={14} w={1.1} />
      </WindowButtons>
    </TabStrip>
    <ToolbarWrap>
      <Toolbar>
        <AddressRow>
          <NavButton><ArrowLeft size={22} strokeWidth={2} /></NavButton>
          <NavButton $dim><ArrowRight size={22} strokeWidth={2} /></NavButton>
          <NavButton><MdRefresh size={23} /></NavButton>
          <Omnibox>
            <SiteInfo><TuneIcon /></SiteInfo>
            <Host w={285}>ap-south-1.console.aws.amazon.com</Host>
            <Fit w={229}>/s3/home?region=ap-south-1</Fit>
            <StarSlot><MdStarBorder size={23} /></StarSlot>
          </Omnibox>
          <Extensions>
            <Ext><svg width="20" height="22" viewBox="0 0 20 22"><path d="M2 2h11v9H2z" fill="#ff7b5a" /><path d="M1 1h4M13 6h5v3h-5M5 13h5v5H5z" fill="#7fa08d" stroke="#d9d9d9" strokeWidth="1" /></svg><ExtBadge $bg="#870087">9</ExtBadge></Ext>
            <Ext><svg width="21" height="21" viewBox="0 0 21 21"><circle cx="10.500" cy="10.500" r="10.500" fill="#6b6b69" /><path d="M10.500 3l5.500 2.500V11q-1 5-5.500 7.500Q6 16 5 11V5.500z" fill="#ecd36a" /><path d="M10.500 3v15.500Q6 16 5 11V5.500z" fill="#f8e896" /></svg></Ext>
            <Ext><svg width="20" height="21" viewBox="0 0 20 21" fill="none" stroke="#2a1c22" strokeWidth="1.400"><path d="M1 1h3l6 9.500L4 20H1l6-9.500zM6 1h3l6 9.500L9 20H6l6-9.500zM11 1h2l6 9.500L13 20h-2l6-9.500z" /></svg></Ext>
            <Ext><ShieldE /></Ext>
            <Ext><svg width="20" height="21" viewBox="0 0 20 21" fill="none"><path d="M10 0q4 2.500 9 2.500V8q0 8-9 13Q1 16 1 8V2.500Q6 2.500 10 0z" fill="#800000" /><path d="M5 6v4.500q.2 2 2 2t2-2V6M12 6v6.500h3V6z" stroke="#fff" strokeWidth="1.600" /></svg><ExtBadge $bg="#666">3</ExtBadge></Ext>
            <Ext><svg width="20" height="21" viewBox="0 0 20 21" fill="none"><ellipse cx="10" cy="11" rx="8.500" ry="9.500" fill="#e2a27c" /><path d="M1.500 10Q1 0 10 0t8.500 10q-3-5-8-6-5 1-9 6z" fill="#a98d5e" /><g stroke="#f3f7f9" strokeWidth="1.800"><circle cx="5.500" cy="11.500" r="3.700" fill="#2f7186" /><circle cx="14.500" cy="11.500" r="3.700" fill="#2f7186" /><path d="M8 11h4" /></g></svg></Ext>
            <Ext><svg width="20" height="21" viewBox="0 0 20 21"><path d="M10 0q4 2.500 9 3v5q0 8-9 13Q1 16 1 8V3Q6 2.500 10 0z" fill="#1268d8" /><path d="M10 6v9" stroke="#fff" strokeWidth="2.200" /></svg></Ext>
            <Ext><svg width="21" height="21" viewBox="0 0 21 21"><rect width="21" height="21" rx="2" fill="#1f1f22" /><FaReact x={1.5} y={1.5} size={18} color="#4fc3e8" /></svg></Ext>
            <Ext><MdOutlineExtension size={25} color="#f0c6d3" /></Ext>
          </Extensions>
          <ToolDivider />
          <ToolSlot><MdOutlineFileDownload size={30} color="#f0c6d3" /></ToolSlot>
          <ToolSlot><Avatar>a</Avatar></ToolSlot>
          <ToolSlot><MdMoreVert size={27} color="#f0c6d3" /></ToolSlot>
        </AddressRow>
        <BookmarkRow>
          <AppsGrid />
          <BookmarkDivider />
          {bookmarks.map(([id, name, w, slot]) => (
            <Bookmark key={id} $w={slot}>{bm[id]}<Fit w={w}>{name}</Fit></Bookmark>
          ))}
          <BookmarkEnd>
            <ChevronsRight size={21} strokeWidth={2.2} />
            <EndDivider />
            <FolderLabel><MdOutlineFolder size={24} color="#e2c6cf" /><Fit w={95}>All Bookmarks</Fit></FolderLabel>
          </BookmarkEnd>
        </BookmarkRow>
      </Toolbar>
    </ToolbarWrap>
  </>
);

const AwsHeader = () => (
  <>
    <AwsNav>
      <FaAws size={41} color="#fff" />
      <NavDivider $l={20} $r={19} />
      <NineDots />
      <NavSearch>
        <Magnifier c="#c6c6cd" />
        <NavSearchText><Italic w={53}>Search</Italic></NavSearchText>
        <NavShortcut><Fit w={56}>[Alt+S]</Fit></NavShortcut>
      </NavSearch>
      <NavRight>
        <NavIcon><ShellIcon /></NavIcon><NavDivider />
        <NavIcon><Bell size={22} strokeWidth={2.4} /></NavIcon><NavDivider />
        <NavIcon><HelpIcon /></NavIcon><NavDivider />
        <NavIcon><Settings size={22} strokeWidth={2.4} /></NavIcon><NavDivider />
        <NavMenu $l={20} $r={22}><Fit w={56}>Mumbai</Fit><Tri d="down" s={11} h={10} /></NavMenu>
        <NavDivider />
        <NavMenu $l={20} $r={23}><Fit w={146}>Aadharsh%20Senthil</Fit><Tri d="down" s={11} h={10} /></NavMenu>
      </NavRight>
    </AwsNav>
    <Crumbs>
      <MenuButton><svg width="18" height="16" viewBox="0 0 18 16" stroke="#fff" strokeWidth="2"><path d="M0 2h18M0 8h18M0 14h18" /></svg></MenuButton>
      <CrumbText><Fit w={92}>Amazon S3</Fit></CrumbText>
      <CrumbTools>
        <InfoIcon /><CrumbDivider /><NotebookIcon /><CrumbGap /><HexIcon />
      </CrumbTools>
    </Crumbs>
  </>
);

const SideBar = () => (
  <Sidebar>
    <SideNav>
      <SideHead><Fit w={118}>Amazon S3</Fit><Chev c={grey} /></SideHead>
      {links.map(([name, w]) => (
        <SideLink key={name}>
          <Fit w={w}>{name}</Fit>
          {name === "Table buckets" && <NewTag><Fit w={31}>New</Fit></NewTag>}
        </SideLink>
      ))}
      <SideRule $t={26} $b={29} />
      <SideBlock><Fit w={247}>Block Public Access settings for</Fit><Fit w={96}>this account</Fit></SideBlock>
      <SideSection><Tri d="down" s={13} h={11} /><Fit w={120}>Storage Lens</Fit></SideSection>
      {lensLinks.map(([name, w]) => <SideLink key={name}><Fit w={w}>{name}</Fit></SideLink>)}
      <SideRule $t={26} $b={24} />
      <SideLink><Fit w={136}>Feature spotlight</Fit><CountTag>10</CountTag></SideLink>
    </SideNav>
    <PageScroll><Scroll thumb={574} /></PageScroll>
  </Sidebar>
);

const Buckets = () => (
  <Main>
    <SnapshotCard>
      <SnapArrow><Tri d="right" s={13} h={15} /></SnapArrow>
      <SnapBody>
        <TitleLine>
          <Strong w={218}>Account snapshot -</Strong>
          <TitleItalic w={251}>updated every 24 hours</TitleItalic>
          <RegionTag><Fit w={112}>All AWS Regions</Fit></RegionTag>
        </TitleLine>
        <Desc>
          <Fit w={863}>Storage lens provides visibility into storage usage and activity trends. Metrics don't include directory buckets.</Fit>
          <LearnMore w={90}>Learn more</LearnMore>
          <ExternalIcon />
        </Desc>
      </SnapBody>
      <Button $w={299}><Fit w={246}>View Storage Lens dashboard</Fit></Button>
    </SnapshotCard>
    <Tabs>
      <ActiveTabItem $active><Fit w={233}>General purpose buckets</Fit></ActiveTabItem>
      <TabRule />
      <TabItem><Fit w={166}>Directory buckets</Fit></TabItem>
    </Tabs>
    <TableCard>
      <TableHead>
        <TitleLine>
          <Strong w={283}>General purpose buckets</Strong>
          <Counter w={28}>(1)</Counter>
          <InfoLink w={29}>Info</InfoLink>
          <RegionTag><Fit w={112}>All AWS Regions</Fit></RegionTag>
        </TitleLine>
        <Actions>
          <Button $w={39}><ReloadIcon /></Button>
          <Button $w={161}><CopyIcon /><Fit w={82}>Copy ARN</Fit></Button>
          <Button $w={108}><Fit w={55}>Empty</Fit></Button>
          <Button $w={108}><Fit w={54}>Delete</Fit></Button>
          <PrimaryButton $w={168}><Fit w={115}>Create bucket</Fit></PrimaryButton>
        </Actions>
      </TableHead>
      <Desc><Fit w={349}>Buckets are containers for data stored in S3.</Fit></Desc>
      <FilterRow>
        <FilterBox><Magnifier /><Italic w={169}>Find buckets by name</Italic></FilterBox>
        <Pager>
          <Chev c="#b4b4bb" /><PageNumber>1</PageNumber><Chev flip c="#b4b4bb" />
          <PagerDivider />
          <Settings size={22} strokeWidth={2.5} />
        </Pager>
      </FilterRow>
      <HeaderRow>
        <span />
        <HeaderCell $light $dark><Fit w={48}>Name</Fit><Tri d="up" s={13} h={11} /></HeaderCell>
        <HeaderCell><Fit w={100}>AWS Region</Fit><SortIcon /></HeaderCell>
        <HeaderCell><Fit w={168}>IAM Access Analyzer</Fit></HeaderCell>
        <HeaderCell $r={10}><Fit w={112}>Creation date</Fit><SortIcon /></HeaderCell>
      </HeaderRow>
      <DataRow>
        <Radio />
        <DataCell><Link w={198}>virtual-classroom-bucket</Link></DataCell>
        <DataCell $up={2}><Fit w={260}>Asia Pacific (Mumbai) ap-south-1</Fit></DataCell>
        <DataCell><Link w={230}>View analyzer for ap-south-1</Link></DataCell>
        <DataCell $up={3}><Fit w={224}>December 6, 2024, 12:38:17</Fit><Fit w={99}>(UTC+05:30)</Fit></DataCell>
      </DataRow>
    </TableCard>
  </Main>
);

const TaskBar = () => (
  <Taskbar>
    <Weather><WeatherIcon /><Lines><Fit w={32}>27°C</Fit><Soft w={87}>Partly cloudy</Soft></Lines></Weather>
    <WindowsIcon />
    <TaskSearch>
      <svg width="19" height="19" viewBox="0 0 19 19" fill="none" stroke="#e8e8ea" strokeWidth="1.900"><circle cx="8" cy="8" r="6.800" /><path d="M13 13l5 5" strokeLinecap="round" /></svg>
      <TaskSearchText><Fit w={52}>Search</Fit></TaskSearchText><CricketIcon />
    </TaskSearch>
    <TaskSlot><TaskIcon><TaskViewIcon /></TaskIcon></TaskSlot>
    <TaskSlot><TaskIcon><CopilotIcon /></TaskIcon></TaskSlot>
    <TaskSlot><TaskIcon><StoreIcon /></TaskIcon></TaskSlot>
    <TaskSlot><TaskIcon><ExplorerIcon /></TaskIcon><RunMark /></TaskSlot>
    <TaskSlot><TaskIcon><TeamsIcon /></TaskIcon></TaskSlot>
    <TaskSlot><TaskIcon><ChromeIcon /></TaskIcon></TaskSlot>
    <TaskSlot><TaskIcon><UIcon /></TaskIcon></TaskSlot>
    <TaskSlot><TaskIcon><CodeIcon /></TaskIcon><RunMark /></TaskSlot>
    <TaskSlot $active><TaskIcon><ChromeIcon /><ProfileDot>a</ProfileDot></TaskIcon><RunMark $on /></TaskSlot>
    <TaskSlot><TaskIcon><XamppIcon /></TaskIcon><RunMark /></TaskSlot>
    <TaskSlot><TaskIcon><FaWhatsapp size={34} color="#25d366" /></TaskIcon><RunMark /></TaskSlot>
    <Tray>
      <TraySlot $w={40}><ChevronUp size={22} /></TraySlot>
      <TraySlot $w={40}><WolfIcon /></TraySlot>
      <TraySlot $w={40}><DefenderIcon /></TraySlot>
      <TraySlot $w={39}><svg width="19" height="20" viewBox="0 0 19 20" fill="none" stroke="#8fdcf2" strokeWidth="1.500"><path d="M17.500 1L1 11l8 1 5 7z" strokeLinejoin="round" /></svg></TraySlot>
      <TraySlot $w={58}><Lines $align="center"><Fit w={29}>ENG</Fit><Fit w={15}>IN</Fit></Lines></TraySlot>
      <TraySlot $w={34}><Wifi size={21} /></TraySlot>
      <TraySlot $w={27}><Volume2 size={21} strokeWidth={1.6} /></TraySlot>
      <TraySlot $w={34}><BatteryIcon /></TraySlot>
      <ClockSlot $w={96}><Lines $align="flex-end"><Fit w={62}>09:04 PM</Fit><Fit w={77}>06-12-2024</Fit></Lines></ClockSlot>
      <TraySlot $w={27}><SnoozeBell /></TraySlot>
    </Tray>
  </Taskbar>
);

export default function App() {
  return (
    <Screen>
      <Global />
      <BrowserChrome />
      <Viewport>
        <Page>
          <AwsHeader />
          <Columns><SideBar /><Buckets /></Columns>
          <Footer>
            <ShellIcon />
            <FooterItem $l={6}><Fit w={74}>CloudShell</Fit></FooterItem>
            <FooterItem $l={31}><Fit w={64}>Feedback</Fit></FooterItem>
            <FooterEnd>
              <FooterItem $l={0} $soft><Fit w={343}>© 2024, Amazon Web Services, Inc. or its affiliates.</Fit></FooterItem>
              <FooterItem $l={37}><Fit w={49}>Privacy</Fit></FooterItem>
              <FooterItem $l={31}><Fit w={42}>Terms</Fit></FooterItem>
              <FooterItem $l={31}><Fit w={129}>Cookie preferences</Fit></FooterItem>
            </FooterEnd>
          </Footer>
        </Page>
        <PageScroll><Scroll thumb={826} /></PageScroll>
      </Viewport>
      <TaskBar />
    </Screen>
  );
}
